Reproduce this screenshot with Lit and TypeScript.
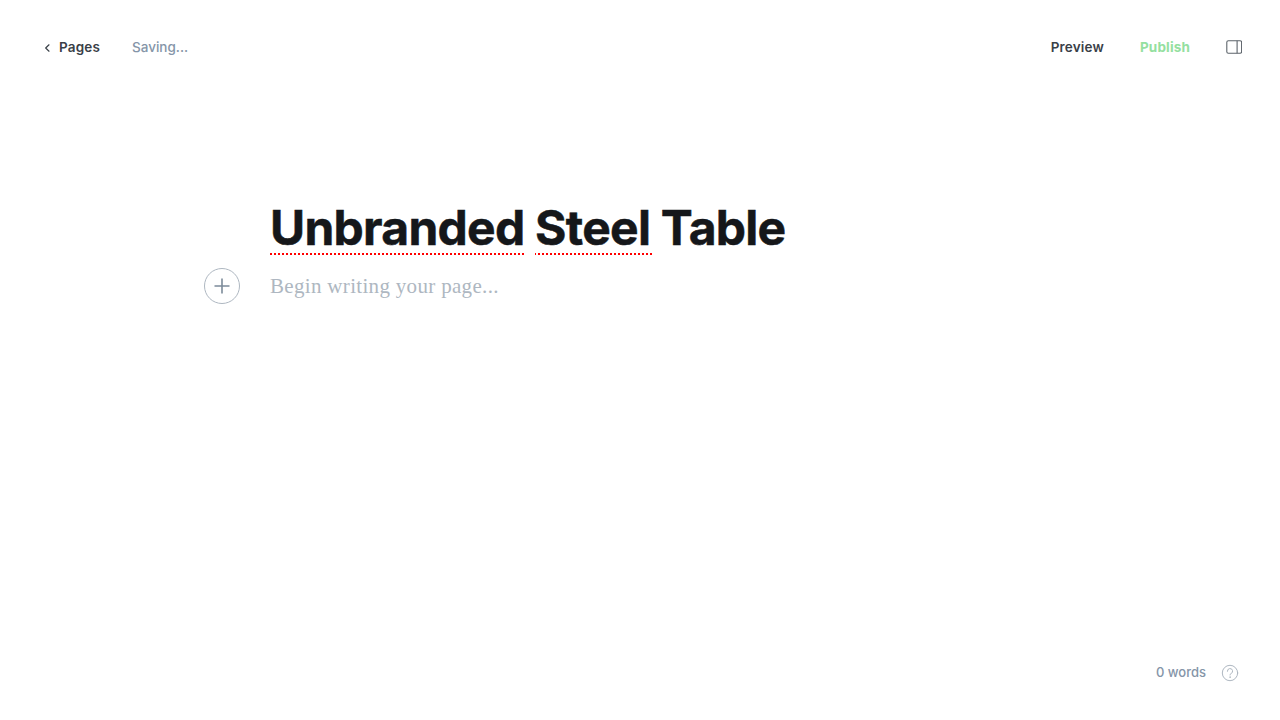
import { LitElement, html, css } from "lit";
import { customElement } from "lit/decorators.js";

@customElement("app-root")
export class AppRoot extends LitElement {
  static styles = css`
    :host {
      display: flex;
      flex-direction: column;
      box-sizing: border-box;
      height: 720px;
      overflow: hidden;
      background: #fff;
      color: #394047;
      font-family: Inter, sans-serif;
      font-size: 13.5px;
      line-height: 20px;
      letter-spacing: 0.16px;
    }
    svg { display: block; flex: none; }
    header {
      display: flex;
      align-items: center;
      justify-content: space-between;
      height: 94px;
      padding: 0 38px 0 44px;
    }
    .group { display: flex; align-items: center; white-space: nowrap; }
    .back { display: flex; align-items: center; gap: 8px; font-weight: 600; }
    .status { margin-left: 32px; color: #8595a8; font-weight: 500; letter-spacing: 0; }
    .actions { gap: 36px; font-weight: 600; }
    .publish { color: #94e0a0; font-weight: 700; }
    main { flex: 1; padding: 106px 0 0 270px; }
    h1 {
      margin: 0;
      color: #15171a;
      font-size: 48px;
      font-weight: 700;
      line-height: 56px;
      letter-spacing: -0.73px;
      white-space: nowrap;
      -webkit-text-stroke: 0.5px #15171a;
    }
    .misspelt {
      display: inline-block;
      height: 55px;
      margin-right: -1px;
      padding-right: 1px;
      background: repeating-linear-gradient(90deg, #f00 0 2px, transparent 2px 4px) left bottom / 100% 2px no-repeat;
    }
    .misspelt.offset {
      margin-right: -2px;
      padding-right: 2px;
      background-image: repeating-linear-gradient(90deg, #f00 0 1px, transparent 1px 3px, #f00 3px 4px);
    }
    .editor { display: flex; align-items: center; gap: 30px; margin: 12px 0 0 -66px; }
    .placeholder {
      color: #aeb7c1;
      font-family: Georgia, "Liberation Serif", serif;
      font-size: 21px;
      line-height: 32px;
      letter-spacing: 0.32px;
    }
    footer {
      display: flex;
      justify-content: flex-end;
      align-items: center;
      gap: 15px;
      height: 94px;
      padding-right: 41px;
      color: #8595a8;
      font-size: 13px;
      font-weight: 500;
      letter-spacing: 0;
    }
    .count { padding-bottom: 2px; }
  `;

  render() {
    return html`
      <header>
        <div class="group">
          <div class="back">
            <svg width="7" height="10" viewBox="0 0 7 10" fill="none" stroke="#394047" stroke-width="1.2" stroke-linecap="round" stroke-linejoin="round"><path d="M5 2.8 1.7 6 5 9.2" /></svg>
            <span>Pages</span>
          </div>
          <span class="status">Saving...</span>
        </div>
        <div class="group actions">
          <span>Preview</span>
          <span class="publish">Publish</span>
          <svg width="16" height="16" viewBox="0 0 16 16" fill="none" stroke="#5d646b" stroke-width="1.1"><rect x=".8" y="1.7" width="14.8" height="12.6" rx="1.6" /><path d="M11.1 1.7v12.6" /></svg>
        </div>
      </header>
      <main>
        <h1><span class="misspelt">Unbranded</span> <span class="misspelt offset">Steel</span> Table</h1>
        <div class="editor">
          <svg width="36" height="36" viewBox="0 0 36 36" fill="none"><circle cx="18" cy="18" r="17.5" stroke="#aeb7c1" /><path d="M18 10.5v15M10.5 18h15" stroke="#7c8b9a" stroke-width="1.6" /></svg>
          <span class="placeholder">Begin writing your page...</span>
        </div>
      </main>
      <footer>
        <span class="count">0 words</span>
        <svg width="18" height="18" viewBox="0 0 18 18" fill="none" stroke="#aeb7c1" stroke-linecap="round"><circle cx="9" cy="9" r="7.7" /><path d="M6.4 7.3A2.6 2.6 0 1 1 9.9 9.6Q9 10 9 11" /><circle cx="9" cy="13.1" r=".25" /></svg>
      </footer>
    `;
  }
}
